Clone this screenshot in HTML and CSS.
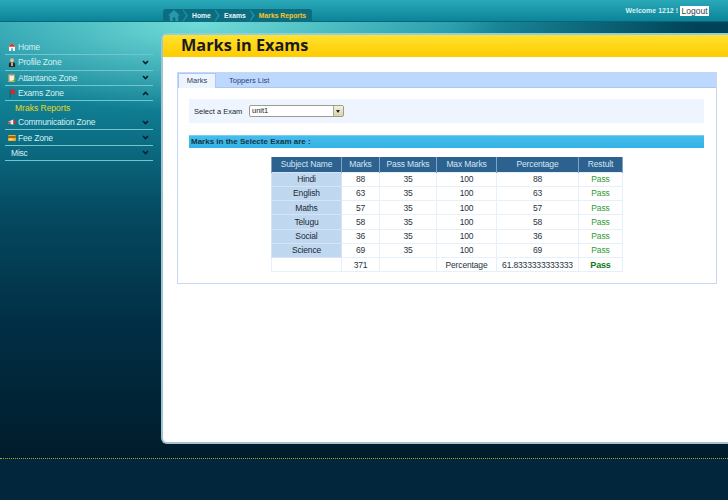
FILE: index.html
```html
<!DOCTYPE html>
<html lang="en">
<head>
  <meta charset="UTF-8">
  <title>Marks in Exams</title>
  <link rel="stylesheet" href="styles.css">
</head>
<body>
  <div class="topbar">
    <div class="crumbs">
      <svg class="crumb-home" width="12" height="11" viewBox="0 0 12 11"><path d="M6 0 L12 5.5 H10.2 V11 H7.3 V7.4 H4.7 V11 H1.8 V5.5 H0 Z" fill="#2a97ab"/></svg>
      <span class="sep"></span>
      <a class="crumb">Home</a>
      <span class="sep"></span>
      <a class="crumb">Exams</a>
      <span class="sep"></span>
      <a class="crumb current">Marks Reports</a>
    </div>
    <div class="user">
      <span>Welcome 1212 !</span>
      <a class="logout">Logout</a>
    </div>
  </div>

  <div class="page">
    <ul class="menu">
      <li class="menu-item">
        <svg class="ico" width="8" height="8" viewBox="0 0 9 9"><path d="M4.5 0 L9 4.2 H7.8 V9 H5.4 V6 H3.6 V9 H1.2 V4.2 H0 Z" fill="#fff"/><path d="M4.5 0 L9 4.2 H0 Z" fill="#c8402c"/></svg>
        <span>Home</span>
      </li>
      <li class="menu-item">
        <svg class="ico" width="8" height="9" viewBox="0 0 9 10"><circle cx="4.5" cy="2.5" r="2.2" fill="#eebd92"/><path d="M1 10 V6.5 Q1 5 3 5 H6 Q8 5 8 6.5 V10 Z" fill="#33261f"/><path d="M3.8 5 H5.2 V9 H3.8 Z" fill="#fff"/></svg>
        <span>Profile Zone</span>
        <svg class="chev" width="7" height="5" viewBox="0 0 7 5"><path d="M1 1 L3.5 3.5 L6 1" fill="none" stroke="#04202c" stroke-width="1.6"/></svg>
      </li>
      <li class="menu-item">
        <svg class="ico" width="8" height="9" viewBox="0 0 9 10"><rect x="0.5" y="1.5" width="7" height="8.5" fill="#d8b46c"/><rect x="2" y="3" width="4.5" height="5.5" fill="#f4f4ee"/><rect x="2.5" y="0.5" width="3" height="2" fill="#8a8f94"/><path d="M5 9 L8.8 5.5 V9 Z" fill="#5fa83c"/></svg>
        <span>Attantance Zone</span>
        <svg class="chev" width="7" height="5" viewBox="0 0 7 5"><path d="M1 1 L3.5 3.5 L6 1" fill="none" stroke="#04202c" stroke-width="1.6"/></svg>
      </li>
      <li class="menu-item">
        <svg class="ico" width="8" height="9" viewBox="0 0 9 10"><rect x="2" y="0.5" width="1" height="9.5" fill="#3b4a55"/><path d="M3 0.5 H8.5 L7 2.8 L8.5 5.5 H3 Z" fill="#d9242c"/></svg>
        <span>Exams Zone</span>
        <svg class="chev" width="7" height="5" viewBox="0 0 7 5"><path d="M1 4 L3.5 1.5 L6 4" fill="none" stroke="#04202c" stroke-width="1.6"/></svg>
      </li>
      <li class="sub-item">Mraks Reports</li>
      <li class="menu-item">
        <svg class="ico" width="8" height="7" viewBox="0 0 9 8"><path d="M0 3 L6 0.5 V6.5 L0 5 Z" fill="#e9eef0"/><path d="M0 3 H3 V5.5 L0 5 Z" fill="#d0342c"/><rect x="6.5" y="1" width="2" height="5" fill="#d0342c"/></svg>
        <span>Communication Zone</span>
        <svg class="chev" width="7" height="5" viewBox="0 0 7 5"><path d="M1 1 L3.5 3.5 L6 1" fill="none" stroke="#04202c" stroke-width="1.6"/></svg>
      </li>
      <li class="menu-item">
        <svg class="ico" width="8" height="6" viewBox="0 0 9 7"><rect width="9" height="7" rx="1" fill="#f0b429"/><rect y="1.6" width="9" height="1.5" fill="#7a3d12"/><rect x="1" y="4.4" width="4" height="1" fill="#fff3c4"/></svg>
        <span>Fee Zone</span>
        <svg class="chev" width="7" height="5" viewBox="0 0 7 5"><path d="M1 1 L3.5 3.5 L6 1" fill="none" stroke="#04202c" stroke-width="1.6"/></svg>
      </li>
      <li class="menu-item plain">
        <span>Misc</span>
        <svg class="chev" width="7" height="5" viewBox="0 0 7 5"><path d="M1 1 L3.5 3.5 L6 1" fill="none" stroke="#04202c" stroke-width="1.6"/></svg>
      </li>
    </ul>

    <div class="panel">
      <h1 class="title">Marks in Exams</h1>
      <div class="tabs">
        <div class="tab-bar">
          <a class="tab active">Marks</a>
          <a class="tab">Toppers List</a>
        </div>
        <div class="tab-body">
          <div class="pick-row">
            <label>Select a Exam</label>
            <div class="combo">
              <span class="combo-text">unit1</span>
              <span class="combo-btn"></span>
            </div>
          </div>
          <h2 class="bar">Marks in the Selecte Exam are :</h2>
          <table class="marks">
            <colgroup>
              <col class="c1"><col class="c2"><col class="c3"><col class="c4"><col class="c5"><col class="c6">
            </colgroup>
            <thead>
              <tr><th>Subject Name</th><th>Marks</th><th>Pass Marks</th><th>Max Marks</th><th>Percentage</th><th>Restult</th></tr>
            </thead>
            <tbody>
              <tr><td class="subj">Hindi</td><td>88</td><td>35</td><td>100</td><td>88</td><td class="pass">Pass</td></tr>
              <tr><td class="subj">English</td><td>63</td><td>35</td><td>100</td><td>63</td><td class="pass">Pass</td></tr>
              <tr><td class="subj">Maths</td><td>57</td><td>35</td><td>100</td><td>57</td><td class="pass">Pass</td></tr>
              <tr><td class="subj">Telugu</td><td>58</td><td>35</td><td>100</td><td>58</td><td class="pass">Pass</td></tr>
              <tr><td class="subj">Social</td><td>36</td><td>35</td><td>100</td><td>36</td><td class="pass">Pass</td></tr>
              <tr><td class="subj">Science</td><td>69</td><td>35</td><td>100</td><td>69</td><td class="pass">Pass</td></tr>
              <tr><td></td><td>371</td><td></td><td>Percentage</td><td>61.8333333333333</td><td class="pass total">Pass</td></tr>
            </tbody>
          </table>
        </div>
      </div>
    </div>
  </div>

  <div class="footer"></div>
</body>
</html>
```

FILE: styles.css
```css
* {
    box-sizing: border-box;
}

html, body {
    height: 100%;
}

body {
    margin: 0;
    height: 500px;
    overflow: hidden;
    font-family: "Liberation Sans", Arial, sans-serif;
    font-size: 8px;
    color: #22323f;
    background-color: #02263b;
}

/* top strip */
.topbar {
    height: 22px;
    display: flex;
    justify-content: space-between;
    padding-left: 163px;
    padding-right: 19px;
    background: linear-gradient(#2aa9b8, #0b8499);
    border-bottom: 1px solid #0a6577;
}

.crumbs {
    margin-top: 9px;
    height: 13px;
    width: 149px;
    display: flex;
    align-items: center;
    padding-left: 5px;
    background-color: #0c6d80;
    border-radius: 3px 3px 0 0;
}

.crumb-home {
    flex: none;
    margin-right: -1px;
}

.crumb {
    color: #e6f6f8;
    font-weight: bold;
    font-size: 6.8px;
    white-space: nowrap;
}

.crumb.current {
    color: #f3c829;
}

.sep {
    width: 5px;
    height: 13px;
    margin: 0 4px;
    flex: none;
    background: #1b93a7;
    clip-path: polygon(0 0, 100% 50%, 0 100%, 0 86%, 60% 50%, 0 14%);
}

.user {
    display: flex;
    align-items: flex-start;
    gap: 2px;
    padding-top: 6px;
    color: #d8f1f4;
    font-size: 7px;
    font-weight: bold;
    line-height: 10px;
}

.logout {
    width: 29px;
    height: 10px;
    line-height: 10px;
    text-align: center;
    background-color: #fff;
    color: #33424e;
    font-size: 8.5px;
    font-weight: normal;
}

/* sidebar + content */
.page {
    height: 436px;
    display: flex;
    align-items: flex-start;
    padding-top: 11px;
    background:
        radial-gradient(ellipse 300px 90px at 200px 0, #72dcd8, rgba(114, 220, 216, 0) 100%),
        linear-gradient(90deg, rgba(0, 66, 87, 0) 450px, #004257 700px) top / 100% 11px no-repeat,
        linear-gradient(#1e96a8 0, #0f7c91 90px, #054a61 190px, #012f45 300px, #001c2b 436px);
}

.menu {
    width: 148px;
    flex: none;
    margin: 7px 8px 0 5px;
    padding: 0;
    list-style: none;
}

.menu-item {
    height: 15.3px;
    display: flex;
    align-items: center;
    padding: 0 4px 0 3px;
    color: #d6f1f3;
    font-size: 8.5px;
    letter-spacing: -0.2px;
    border-bottom: 1px solid #6fc6cf;
}

.ico {
    flex: none;
}

.menu-item span {
    margin-left: 2px;
    flex: 1;
    white-space: nowrap;
}

.menu-item.plain span {
    margin-left: 3px;
}

.chev {
    flex: none;
}

.sub-item {
    height: 14px;
    line-height: 15px;
    padding-left: 10px;
    color: #e8d81e;
    font-size: 8.5px;
}

.panel {
    width: 567px;
    height: 411px;
    flex: none;
    background-color: #fff;
    border-left: 2px solid #9fc4d4;
    border-top: 2px solid #8fd0dc;
    border-bottom: 2px solid #a9c0cf;
    border-radius: 6px 0 0 6px;
}

.title {
    margin: 0;
    height: 22px;
    padding-left: 18px;
    font-family: "Open Sans", sans-serif;
    font-size: 16.3px;
    line-height: 21px;
    font-weight: 700;
    color: #1a1a20;
    background: linear-gradient(#ffe22e, #ffcb00);
    border-top-left-radius: 4px;
}

.tabs {
    width: 540px;
    height: 212px;
    margin: 15px 0 0 14px;
    border: 1px solid #c6d8f2;
}

.tab-bar {
    height: 15px;
    display: flex;
    background-color: #bdd8fd;
    border-bottom: 1px solid #a9c8f5;
}

.tab {
    height: 15px;
    line-height: 15px;
    padding: 0 13px;
    color: #29407a;
    font-size: 7.5px;
    white-space: nowrap;
}

.tab.active {
    width: 38px;
    padding: 0;
    text-align: center;
    background-color: #edf4fe;
    border: 1px solid #a9c8f5;
    border-bottom: 0;
    line-height: 14px;
    color: #33405a;
}

.tab-body {
    padding: 11px 12px 0 11px;
}

.pick-row {
    height: 24px;
    display: flex;
    align-items: center;
    padding-left: 5px;
    background-color: #eef5fe;
    font-size: 7.5px;
    color: #1c2833;
}

.pick-row label {
    width: 55px;
    white-space: nowrap;
}

.combo {
    width: 95px;
    height: 12px;
    display: flex;
    background-color: #fff;
    border: 1px solid #9c9c8c;
    border-radius: 2px;
}

.combo-text {
    flex: 1;
    padding-left: 2px;
    line-height: 10px;
    color: #222;
    font-size: 7.5px;
}

.combo-btn {
    width: 10px;
    position: relative;
    background: linear-gradient(#f6f2dc, #d9d3ae);
    border-left: 1px solid #aaa88f;
}

.combo-btn::after {
    content: "";
    position: absolute;
    left: 2px;
    top: 4px;
    border: 2.5px solid transparent;
    border-top: 3px solid #222;
    border-bottom: 0;
}

.bar {
    margin: 12px 0 0;
    height: 13px;
    padding-left: 2px;
    font-size: 8px;
    line-height: 12px;
    font-weight: bold;
    color: #143544;
    background: linear-gradient(#46bdec, #32b2e6);
    border-top: 1px solid #7bd0f2;
    white-space: nowrap;
}

.marks {
    width: 351px;
    margin: 9px 0 0 82px;
    border-collapse: collapse;
    table-layout: fixed;
    font-size: 8.5px;
    letter-spacing: -0.15px;
}

.c1 { width: 70px; }
.c2 { width: 38px; }
.c3 { width: 57px; }
.c4 { width: 60px; }
.c5 { width: 82px; }
.c6 { width: 44px; }

.marks th {
    height: 15px;
    padding: 0;
    font-weight: normal;
    color: #d3e6f3;
    background-color: #2c6190;
    border: 1px solid #7fa3c1;
    border-width: 0 1px;
    white-space: nowrap;
}

.marks td {
    height: 14.25px;
    padding: 0;
    text-align: center;
    color: #27343f;
    border: 1px solid #e6f0fa;
    white-space: nowrap;
}

.marks td.subj {
    background-color: #c0d8ef;
    color: #1c2833;
    border-color: #d5e5f5;
}

.marks td.pass {
    color: #2f9a2f;
}

.marks td.total {
    color: #0a7a12;
    font-weight: bold;
    font-size: 9px;
}

.footer {
    height: 42px;
    background-color: #02263b;
    border-top: 1px dotted #a8a62a;
}
```
